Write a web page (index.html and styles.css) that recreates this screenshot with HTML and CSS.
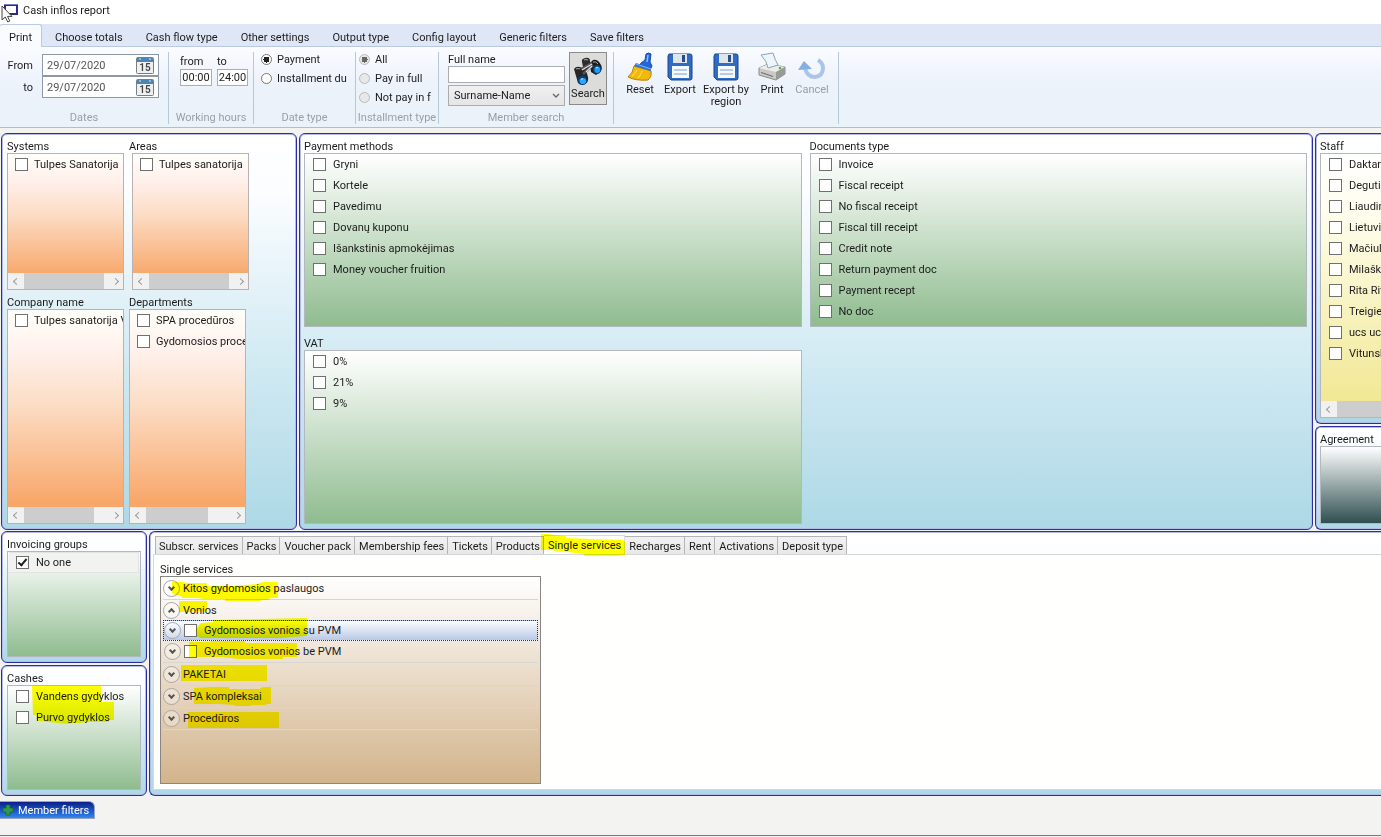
FILE: index.html
```
<!DOCTYPE html>
<html lang="en">
<head>
<meta charset="utf-8">
<title>Cash inflos report</title>
<link rel="stylesheet" href="styles.css">
</head>
<body>
<header class="titlebar">
  <svg class="app-icon" width="20" height="20" viewBox="0 0 20 20" aria-hidden="true">
    <rect x="5" y="2" width="12" height="9" fill="#fff" stroke="#2a2a8c" stroke-width="2"/>
    <path d="M4 1.5h14" stroke="#7a7ac8"/>
    <path d="M2 3v14l3.300-3 2.500 5 2-1-2.300-4.600h4.500z" fill="#fff" stroke="#444"/>
  </svg>
  <h1>Cash inflos report</h1>
</header>
<nav class="ribbon-tabs" role="tablist">
  <button class="active" role="tab">Print</button>
  <button role="tab">Choose totals</button>
  <button role="tab">Cash flow type</button>
  <button role="tab">Other settings</button>
  <button role="tab">Output type</button>
  <button role="tab">Config layout</button>
  <button role="tab">Generic filters</button>
  <button role="tab">Save filters</button>
</nav>
<section class="ribbon">
  <fieldset class="group g-dates">
    <div class="group-body dates">
      <label for="d1">From</label>
      <span class="date"><input id="d1" type="text" value="29/07/2020"><button aria-label="Pick start date"><svg width="18" height="17" viewBox="0 0 18 17"><rect x=".5" y=".5" width="17" height="16" rx="1" fill="#eef0f1" stroke="#777f86"/><path d="M1 1h16v4H1z" fill="#4b86b0"/><path d="M4 1v2M14 1v2" stroke="#dfe9f0"/><text x="9" y="14" text-anchor="middle">15</text></svg></button></span>
      <label for="d2">to</label>
      <span class="date"><input id="d2" type="text" value="29/07/2020"><button aria-label="Pick end date"><svg width="18" height="17" viewBox="0 0 18 17"><rect x=".5" y=".5" width="17" height="16" rx="1" fill="#eef0f1" stroke="#777f86"/><path d="M1 1h16v4H1z" fill="#4b86b0"/><path d="M4 1v2M14 1v2" stroke="#dfe9f0"/><text x="9" y="14" text-anchor="middle">15</text></svg></button></span>
    </div>
    <p class="caption">Dates</p>
  </fieldset>
  <fieldset class="group g-hours">
    <div class="group-body hours">
      <label for="h1">from</label><label for="h2">to</label>
      <input id="h1" type="text" value="00:00"><input id="h2" type="text" value="24:00">
    </div>
    <p class="caption">Working hours</p>
  </fieldset>
  <fieldset class="group g-datetype">
    <div class="group-body radios">
      <label><input type="radio" name="dt" checked>Payment</label>
      <label><input type="radio" name="dt">Installment du</label>
    </div>
    <p class="caption">Date type</p>
  </fieldset>
  <fieldset class="group g-inst">
    <div class="group-body radios">
      <label><input type="radio" name="it" checked disabled>All</label>
      <label><input type="radio" name="it" disabled>Pay in full</label>
      <label><input type="radio" name="it" disabled>Not pay in f</label>
    </div>
    <p class="caption">Installment type</p>
  </fieldset>
  <fieldset class="group g-search">
    <div class="group-body search">
      <div class="search-fields">
        <label for="fn">Full name</label>
        <input id="fn" type="text">
        <div class="select"><select aria-label="Name order"><option>Surname-Name</option></select><svg width="8" height="6" viewBox="0 0 8 6"><path d="M1 1l3 3 3-3" fill="none" stroke="#666" stroke-width="1.300"/></svg></div>
      </div>
      <button class="search-btn">
        <svg width="30" height="30" viewBox="0 0 30 30">
          <path d="M9 5q-1-3 3-4 5-1 5 3l1 6-5 4-3-4z" fill="#2d2d2d"/>
          <path d="M17 6l3-3q5-1 8 5 2 4-1 7l-4 3-5-3z" fill="#1c1c1c"/>
          <path d="M1 12q2-3 6-2l6 3 2 7q1 5-3 7-4 2-7-1z" fill="#262626"/>
          <path d="M8 12l11-6M10 17l10-9" stroke="#555" stroke-width="2.500"/>
          <path d="M9 13l10-6M13 15l6-6" stroke="#e0e0e0" stroke-width="1.200"/>
          <path d="M11 3q2-1 4 0M20 5q3-1 5 2M3 12q2-1 4 0" stroke="#aaa" fill="none"/>
          <ellipse cx="24" cy="12.500" rx="4.200" ry="4.500" fill="#0b3f78"/>
          <ellipse cx="24.300" cy="12.800" rx="2.900" ry="3.300" fill="#1f9cf5"/>
          <ellipse cx="9.500" cy="23.500" rx="4.700" ry="4.500" fill="#0b3f78"/>
          <ellipse cx="9.800" cy="24" rx="3.300" ry="3.100" fill="#27a9ff"/>
          <path d="M8 22.500l2-1M23 11l2-.5" stroke="#bfe6ff"/>
        </svg>
        <span>Search</span>
      </button>
    </div>
    <p class="caption">Member search</p>
  </fieldset>
  <div class="group actions">
    <button class="w40">
      <svg width="28" height="30" viewBox="0 0 28 30"><path d="M15 11l4-3 1-6q3-2 5 0l-1 8 2 4-2 4-10-5z" fill="#2467d4" stroke="#1b4da8"/><path d="M22 3l-1 7" stroke="#8fbcff" stroke-width="1.500"/><path d="M8 14l17 5q1 6-3 9-12 1-20-3 5-4 6-11z" fill="#f0b90c" stroke="#b98300"/><path d="M10 11l15 5v3L8 14z" fill="#2f6fd8"/><path d="M10 12l15 5" stroke="#7fb0f5"/><path d="M11 18q-2 4-5 6M16 19q-1 4-4 7" stroke="#ffe36b" fill="none"/></svg>
      <span>Reset</span></button>
    <button class="w40">
      <svg width="28" height="30" viewBox="0 0 28 30"><path d="M3 2h21q2 0 2 2v22q0 2-2 2H5l-3-3V4z" fill="#2f6cc4" stroke="#1b458c"/><path d="M7 2h14v9H7z" fill="#dfe5ec"/><path d="M16 3h3v7h-3z" fill="#23518f"/><path d="M6 14h17v12H6z" fill="#f6f9fc"/><path d="M8 18h13M8 22h13" stroke="#7ba0cf"/></svg>
      <span>Export</span></button>
    <button class="w50">
      <svg width="28" height="30" viewBox="0 0 28 30"><path d="M3 2h21q2 0 2 2v22q0 2-2 2H5l-3-3V4z" fill="#2f6cc4" stroke="#1b458c"/><path d="M7 2h14v9H7z" fill="#dfe5ec"/><path d="M16 3h3v7h-3z" fill="#23518f"/><path d="M6 14h17v12H6z" fill="#f6f9fc"/><path d="M8 18h13M8 22h13" stroke="#7ba0cf"/></svg>
      <span>Export by region</span></button>
    <button class="w40">
      <svg width="28" height="30" viewBox="0 0 28 30"><path d="M1 16l9-4 17 3v7l-9 6-17-5z" fill="#c9c9c6" stroke="#8b8b88"/><path d="M1 16l9-4 17 3-9 5z" fill="#ececea"/><path d="M18 20l9-5v7l-9 6z" fill="#9a9a97"/><path d="M3 3l12-2q2 7 5 12l-10 3q-1-7-7-13z" fill="#eef6fd" stroke="#8aa3ba"/><path d="M3 20l12 4v1L3 21z" fill="#666"/><circle cx="22" cy="16" r="1.300" fill="#3cba3c"/></svg>
      <span>Print</span></button>
    <button class="w40" disabled>
      <svg width="28" height="30" viewBox="0 0 28 30"><path d="M7 16q2 9 10 9 8-1 8-9 0-5-5-8" fill="none" stroke="#a9c6ea" stroke-width="4"/><path d="M0 18l6-9 8 8z" fill="#86afe0"/></svg>
      <span>Cancel</span></button>
  </div>
</section>

<main class="workspace">
  <div class="row-top">
    <section class="panel org">
      <div class="box"><h2>Systems</h2><div class="list orange"><label><input type="checkbox">Tulpes Sanatorija</label><div class="hscroll s80"><i></i></div></div></div>
      <div class="box"><h2>Areas</h2><div class="list orange inset"><label><input type="checkbox">Tulpes sanatorija</label><div class="hscroll s80"><i></i></div></div></div>
      <div class="box"><h2>Company name</h2><div class="list orange"><label><input type="checkbox">Tulpes sanatorija V</label><div class="hscroll s70"><i></i></div></div></div>
      <div class="box"><h2>Departments</h2><div class="list orange"><label><input type="checkbox">SPA procedūros</label><label><input type="checkbox">Gydomosios proce</label><div class="hscroll s62"><i></i></div></div></div>
    </section>
    <section class="panel docs">
      <div class="box"><h2>Payment methods</h2><div class="list green">
        <label><input type="checkbox">Gryni</label><label><input type="checkbox">Kortele</label><label><input type="checkbox">Pavedimu</label><label><input type="checkbox">Dovanų kuponu</label><label><input type="checkbox">Išankstinis apmokėjimas</label><label><input type="checkbox">Money voucher fruition</label></div></div>
      <div class="box"><h2>Documents type</h2><div class="list green">
        <label><input type="checkbox">Invoice</label><label><input type="checkbox">Fiscal receipt</label><label><input type="checkbox">No fiscal receipt</label><label><input type="checkbox">Fiscal till receipt</label><label><input type="checkbox">Credit note</label><label><input type="checkbox">Return payment doc</label><label><input type="checkbox">Payment recept</label><label><input type="checkbox">No doc</label></div></div>
      <div class="box"><h2>VAT</h2><div class="list green">
        <label><input type="checkbox">0%</label><label><input type="checkbox">21%</label><label><input type="checkbox">9%</label></div></div>
    </section>
    <div class="col-staff">
      <section class="panel open staff"><div class="box"><h2>Staff</h2><div class="list yellow">
        <label><input type="checkbox">Daktara</label><label><input type="checkbox">Deguti</label><label><input type="checkbox">Liaudin</label><label><input type="checkbox">Lietuvi</label><label><input type="checkbox">Mačiul</label><label><input type="checkbox">Milašk</label><label><input type="checkbox">Rita Rit</label><label><input type="checkbox">Treigie</label><label><input type="checkbox">ucs ucs</label><label><input type="checkbox">Vitunsk</label>
        <div class="hscroll wide"><i></i></div></div></div></section>
      <section class="panel open agreement"><div class="box"><h2>Agreement</h2><div class="list slate"></div></div></section>
    </div>
  </div>
  <div class="row-bottom">
    <div class="col-groups">
      <section class="panel"><div class="box"><h2>Invoicing groups</h2><div class="list green"><label class="picked"><input type="checkbox" checked>No one</label></div></div></section>
      <section class="panel"><div class="box"><h2>Cashes</h2><div class="list green cashes"><label><input type="checkbox">Vandens gydyklos</label><label><input type="checkbox">Purvo gydyklos</label>
        <svg class="marker" width="130" height="50" viewBox="0 0 130 50"><path d="M24 0H93V16H106V34H101V36H78L72 37H64L60 38 30 35V29H25Z"/></svg></div></div></section>
    </div>
    <section class="panel open services">
      <div class="tabs" role="tablist">
        <button role="tab">Subscr. services</button><button role="tab">Packs</button><button role="tab">Voucher pack</button><button role="tab">Membership fees</button><button role="tab">Tickets</button><button role="tab">Products</button><button role="tab" class="active">Single services<svg class="marker" width="86" height="24" viewBox="0 0 86 24"><path d="M0 0H8L12 1 24 2 26 4 50 5 82 6 84 8V21L76 22H44L42 20 26 18 8 16H0Z"/></svg></button><button role="tab">Recharges</button><button role="tab">Rent</button><button role="tab">Activations</button><button role="tab">Deposit type</button>
      </div>
      <div class="tab-page">
        <h2>Single services</h2>
        <div class="tree">
          <div class="node"><button class="exp" aria-label="Expand"></button><span>Kitos gydomosios paslaugos</span></div>
          <div class="node opened"><button class="exp up" aria-label="Collapse"></button><span>Vonios</span></div>
          <div class="node child selected"><button class="exp" aria-label="Expand"></button><label><input type="checkbox">Gydomosios vonios su PVM</label></div>
          <div class="node child last"><button class="exp" aria-label="Expand"></button><label><input type="checkbox">Gydomosios vonios be PVM</label></div>
          <div class="node"><button class="exp" aria-label="Expand"></button><span>PAKETAI</span></div>
          <div class="node"><button class="exp" aria-label="Expand"></button><span>SPA kompleksai</span></div>
          <div class="node"><button class="exp" aria-label="Expand"></button><span>Procedūros</span></div>
          <svg class="marker" width="160" height="160" viewBox="0 0 160 160"><path d="M11 5H24V6H46V9H70L96 7 102 5H117V21H110L107 23H102L98 24H64V22H42L38 21H22L18 18H14L11 16Z"/><path d="M18 24H46V34H34L30 35H18Z"/><path d="M52 43L146 41V59L130 60 120 61H40L36 59 35 52 40 46 52 45Z"/><path d="M28 65H50V64H84V66H136V80H122V82H78L60 80H28Z"/><path d="M20 88H106V104H20Z"/><path d="M33 111 50 110H68V112H98L102 110H110V127H106L104 128H90V129H74V128L58 127H33Z"/><path d="M27 135H118V151H27Z"/></svg>
        </div>
      </div>
    </section>
  </div>
</main>
<footer class="dock">
  <button class="member-filters"><svg width="12" height="12" viewBox="0 0 12 12"><path d="M4 1h4v3h3v4H8v3H4V8H1V4h3z" fill="#2d9a45" stroke="#14602a" stroke-width=".6"/></svg>Member filters</button>
</footer>
</body>
</html>
```
FILE: styles.css
```
*, *::before, *::after { box-sizing: border-box; }
body {
  margin: 0; min-height: 100vh; display: flex; flex-direction: column; overflow: hidden;
  background: #f3f3f2; color: #1c1c1c;
  font: 11px/13px Roboto, "Noto Sans", sans-serif;
}
button, input, select { font: inherit; color: inherit; margin: 0; }
button { padding: 0; border: 0; background: none; cursor: default; }
h1, h2, p { margin: 0; font: inherit; }
fieldset { margin: 0; border: 0; padding: 0; min-width: 0; }
svg { display: block; flex: none; }

.titlebar { display: flex; align-items: center; gap: 3px; height: 24px; background: #fff; padding-bottom: 3px; }
.app-icon { margin-top: 5px; }

.ribbon-tabs { display: flex; height: 23px; background: #dfe7f7; border-bottom: 1px solid #b9cbe3; }
.ribbon-tabs button { padding: 3px 12px 0 11px; height: 23px; white-space: nowrap; }
.ribbon-tabs .active { padding: 2px 9px 0; width: 42px; margin-right: 2px; background: #f9fbfe; border: 1px solid #b9cbe3; border-width: 1px 1px 0 0; border-radius: 3px 3px 0 0; }

.ribbon { display: flex; height: 81px; padding: 5px 0 3px; border-bottom: 1px solid #aac0da; background: linear-gradient(#fafcff, #edf2fb 45%, #e9f3f8); }
.group { display: flex; flex-direction: column; border-right: 1px solid #b6c8dd; overflow: hidden; }
.group-body { flex: 1; }
.caption { text-align: center; color: #9a9fa6; white-space: nowrap; }
.g-dates { width: 169px; }
.g-hours { width: 85px; }
.g-datetype { width: 102px; }
.g-inst { width: 83px; }
.g-search { width: 175px; }
.dates { display: grid; grid-template-columns: 33px 117px; column-gap: 9px; grid-auto-rows: 22px; align-items: center; align-content: start; padding-top: 2px; }
.dates label { text-align: right; }
.date { display: flex; align-items: center; height: 22px; padding-right: 4px; border: 1px solid #8d99a6; background: #fff; }
.date input { flex: 1; min-width: 0; border: 0; padding: 0 4px; background: none; color: #555; outline: 0; }
.date text { font-size: 10px; font-weight: 600; fill: #444; }
.hours { display: grid; grid-template-columns: 32px 31px; column-gap: 5px; grid-template-rows: 14px 17px; align-content: start; padding: 3px 0 0 11px; }
.hours input { width: 100%; padding: 0; text-align: center; border: 1px solid #abadb3; background: #fff; }
.radios { display: flex; flex-direction: column; gap: 6px; padding-left: 7px; padding-top: 1px; }
.radios label { display: flex; align-items: center; gap: 5px; white-space: nowrap; }
.g-inst .radios { padding-left: 3px; }
input[type="radio"] { appearance: none; flex: none; width: 11px; height: 11px; border: 1px solid #777; border-radius: 50%; background: #fff; }
input[type="radio"]:checked { background: radial-gradient(circle, #222 0 3px, #fff 3px); }
input[type="radio"]:disabled { border-color: #bbb; background: #e8e8e8; }
input[type="radio"]:disabled:checked { background: radial-gradient(circle, #666 0 3px, #e8e8e8 3px); }
.search { display: flex; gap: 4px; padding-left: 9px; }
.search-fields { display: flex; flex-direction: column; width: 117px; padding-top: 1px; }
.search-fields input { height: 17px; border: 1px solid #abadb3; background: #fff; }
.select { display: flex; align-items: center; margin-top: 2px; height: 21px; padding-right: 4px; border: 1px solid #acacac; background: linear-gradient(#f0f0f0, #e5e5e5); }
.select select { appearance: none; flex: 1; border: 0; padding: 0 5px; background: none; }
.search-btn { display: flex; flex-direction: column; align-items: center; width: 38px; height: 53px; padding-top: 4px; border: 1px solid #8b8b8b; background: #dcdcdb; }
.actions { flex-direction: row; align-items: flex-start; width: 225px; padding-left: 6px; }
.actions button { display: flex; flex-direction: column; align-items: center; line-height: 12px; }
.actions svg { margin-bottom: 2px; }
.actions button:disabled { color: #9a9fa6; }
.w40 { width: 40px; }
.w50 { width: 52px; }

.workspace { flex: none; padding: 5px 0 0 1px; display: flex; flex-direction: column; gap: 2px; }
.row-top { display: grid; grid-template-columns: 296px minmax(0, 1fr) 66px; gap: 2px; height: 396px; }
.row-bottom { display: grid; grid-template-columns: 146px minmax(0, 1fr); gap: 2px; height: 265px; }
.panel { border: 1px solid #2d2da2; border-radius: 6px; box-shadow: inset 0 0 0 1px #b4bce8; padding: 6px 5px 5px; background: linear-gradient(#fff, #fbfdff 15%, #cfe9f2 60%, #add8e6); min-width: 0; }
.panel.open { border-right: 0; border-radius: 6px 0 0 6px; padding-right: 0; margin-right: -1px; overflow: hidden; }
.panel.docs, .col-staff .panel { padding-left: 4px; }
.col-staff, .col-groups { display: grid; gap: 2px; min-width: 0; }
.col-staff { grid-template-rows: 291px minmax(0, 1fr); }
.col-groups { grid-template-rows: 1fr 1fr; }
.col-staff .panel, .col-groups .panel { display: flex; }
.box { display: flex; flex-direction: column; flex: 1; min-width: 0; min-height: 0; }
.box h2 { line-height: 13px; white-space: nowrap; }
.org { display: grid; grid-template-columns: 118px 120px; grid-template-rows: 150px 1fr; gap: 6px 4px; }
.docs { display: grid; grid-template-columns: 1fr 1fr; grid-template-rows: 187px 187px; gap: 10px 8px; }
.org .list { width: 117px; }
.org .inset { margin-left: 3px; }

.list { position: relative; flex: 1; display: flex; flex-direction: column; overflow: hidden; border: 1px solid #b3b7bf; }
.list label { display: flex; align-items: center; gap: 7px; flex: none; height: 21px; padding-left: 8px; white-space: nowrap; }
.org .list label { padding-left: 7px; gap: 6px; }
.list .picked { margin: 0 1px; padding-left: 7px; background: #f2f2f1; border: 1px solid #e2e4e2; border-left: 0; }
.orange { background: linear-gradient(#fffffa, #fff0eb 20%, #fcdcc4 45%, #f8a76a 90%); border-color: #b9b2b0; }
.green { background: linear-gradient(#fff, #8fbc8f); }
.yellow { background: linear-gradient(#fff, #fffef0 20%, #f0e68c); border-right: 0; }
.slate { background: linear-gradient(#fff, #2f4f4f); border-right: 0; }

input[type="checkbox"] { appearance: none; flex: none; width: 13px; height: 13px; border: 1px solid #707070; background: #fff; }
input[type="checkbox"]:checked { position: relative; }
input[type="checkbox"]:checked::after { content: ""; position: absolute; left: 3px; top: 0; width: 5px; height: 9px; border: solid #222; border-width: 0 2px 2px 0; transform: rotate(40deg); }

.hscroll { display: flex; align-items: center; justify-content: space-between; height: 16px; margin-top: auto; background: #f1f1f1; }
.hscroll::before, .hscroll::after { content: ""; width: 5px; height: 5px; margin: 0 5px 0 6px; border: solid #999; border-width: 1px 0 0 1px; transform: rotate(-45deg); flex: none; }
.hscroll::after { transform: rotate(135deg); }
.hscroll i { height: 16px; background: #cdcdcd; margin-right: auto; }
.s80 i { width: 80px; }
.s70 i { width: 70px; }
.s62 i { width: 62px; }
.wide::after { display: none; }
.wide i { flex: 1; }

.marker { position: absolute; left: 0; top: 0; mix-blend-mode: multiply; pointer-events: none; fill: #ffff00; }

.services { display: flex; flex-direction: column; padding: 4px 0 5px 3px; }
.tabs { display: flex; align-items: flex-end; padding-left: 2px; height: 18px; }
.tabs button { height: 18px; padding: 1px 3px 0; white-space: nowrap; background: linear-gradient(#f2f2f2, #e8e8e8); border: 1px solid #b5b5b5; border-bottom: 0; }
.tabs button + button { border-left: 0; padding-left: 4px; }
.tabs .active { position: relative; height: 19px; background: #fff; border-color: #dcdcdc; }
.tabs .marker { top: -2px; left: -3px; }
.tab-page { flex: 1; background: #fffffe; border: 1px solid #d6d9d9; border-right: 0; padding: 8px 0 5px 6px; display: flex; flex-direction: column; }
.tab-page h2 { line-height: 13px; }
.tree { position: relative; flex: 1; width: 381px; padding: 1px 2px; border: 1px solid #8a8580; background: linear-gradient(#fff, #d2b48c); }
.node { display: flex; align-items: center; gap: 3px; height: 22px; border-bottom: 1px solid #d8d6d2; }
.node label { display: flex; align-items: center; gap: 7px; }
.node.opened { height: 20px; border-bottom: 0; }
.node.child { padding-left: 1px; }
.node.last { margin-bottom: 1px; }
.node.selected { height: 21px; background: linear-gradient(#fcfdff, #b9c9e6); border: 1px dotted #333; padding-left: 0; }
.exp { display: grid; place-items: center; flex: none; width: 17px; height: 17px; border: 1px solid #aaa6a2; border-radius: 50%; background: rgba(255, 255, 255, 0.3); }
.exp::before { content: ""; width: 5px; height: 5px; margin-top: -2px; border: solid #555; border-width: 0 2px 2px 0; transform: rotate(45deg); }
.exp.up::before { margin-top: 2px; transform: rotate(225deg); }

.dock { flex: 1; padding-top: 5px; border-bottom: 1px solid #777; margin-bottom: 1px; }
.member-filters { display: flex; align-items: center; gap: 4px; height: 18px; padding: 0 5px 0 2px; color: #fff; background: linear-gradient(#0a1f8c, #2f86f0); border: 1px solid #9aa4c0; border-left: 0; border-radius: 0 6px 0 0; }
```
